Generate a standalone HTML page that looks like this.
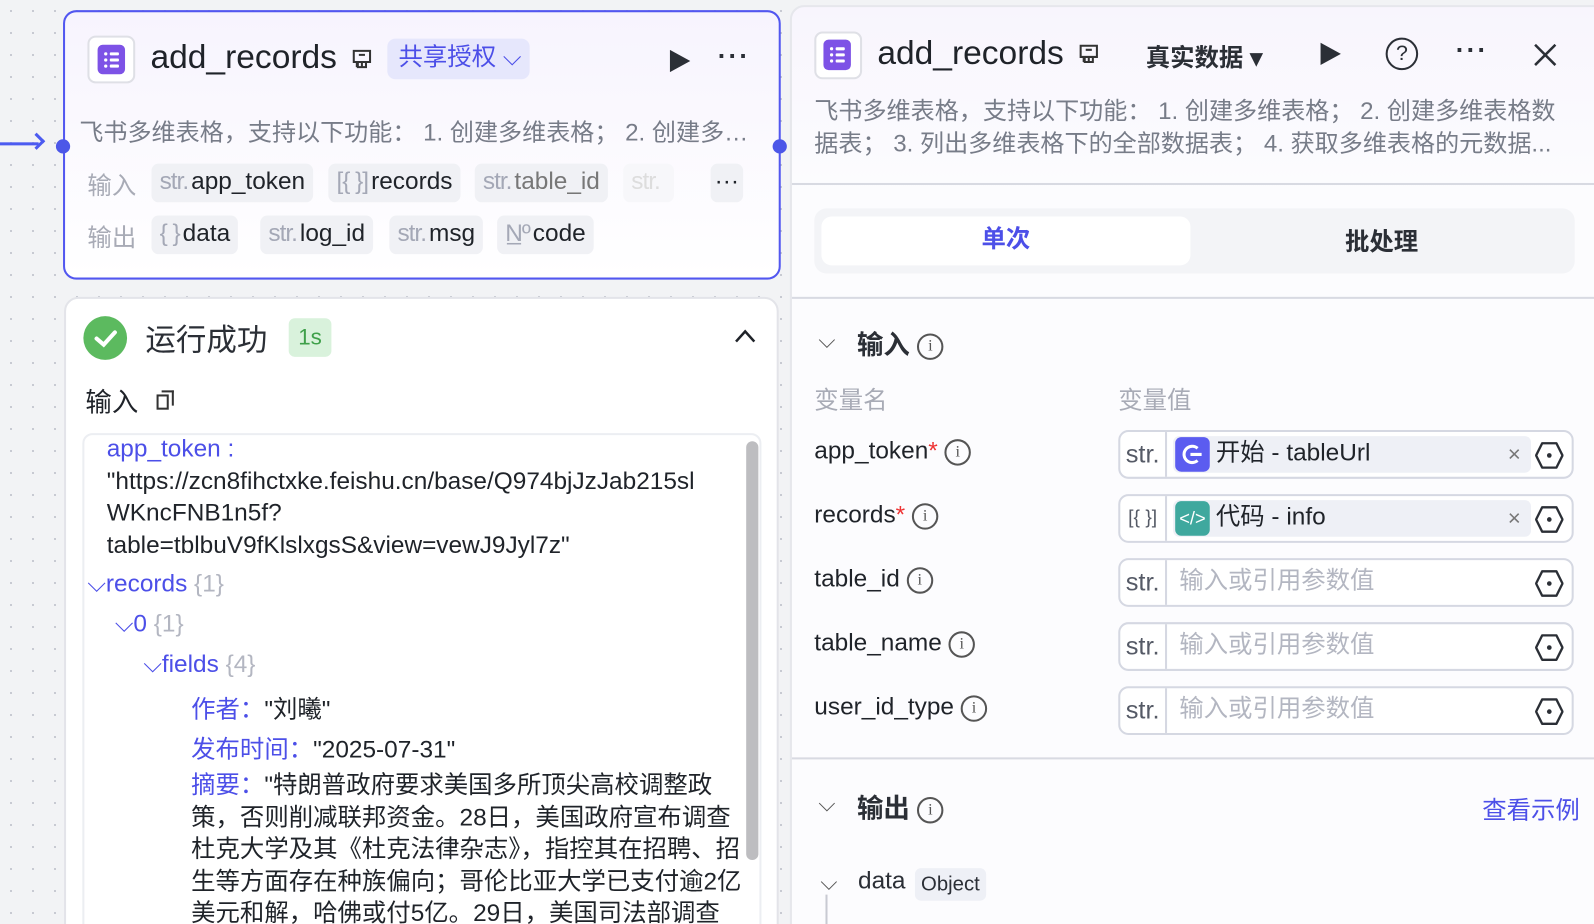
<!DOCTYPE html>
<html><head><meta charset="utf-8"><style>
*{box-sizing:border-box;margin:0;padding:0}
html,body{width:1594px;height:924px;overflow:hidden}
body{background:#f2f3f5;font-family:"Liberation Sans","Noto Sans CJK SC",sans-serif;color:#1f2329;position:relative;
background-image:radial-gradient(#c4c7cf 1px,transparent 1.2px);background-size:22px 22px}
#w{position:absolute;left:0;top:0;width:1568px;height:910px;transform:scale(1.0166);transform-origin:0 0}
.a{position:absolute;white-space:nowrap}
.tag{position:absolute;height:38px;background:#f0f1f5;border-radius:7px;font-size:24px;line-height:36px;padding:0 8px;color:#1f2329}
.tag i{font-style:normal;color:#a4a8b6;margin-right:3px;letter-spacing:-1px}
.ic{display:inline-block;width:26px;height:26px;border:2px solid #555;border-radius:50%;font-size:16px;line-height:22px;text-align:center;color:#555;font-family:"Liberation Serif",serif;vertical-align:middle;font-weight:normal}
.fld{position:absolute;left:1100px;width:448px;height:48px;border:2px solid #d5d8e2;border-radius:10px;background:#fff}
.fld .t{position:absolute;left:0;top:0;width:46px;height:44px;border-right:2px solid #d5d8e2;font-size:25px;line-height:44px;text-align:center;color:#555a66}
.fld .ph{position:absolute;left:58px;top:0;line-height:42px;font-size:24px;color:#b3b6c1}
.fld .hx{position:absolute;right:8px;top:9px}
.chip{position:absolute;left:52px;top:4px;width:352px;height:36px;background:#eef0f6;border-radius:6px}
.chip .b{position:absolute;left:2px;top:1px;width:34px;height:34px;border-radius:6px}
.chip .l{position:absolute;left:42px;top:0;line-height:34px;font-size:24px;color:#1f2329}
.chip .x{position:absolute;right:10px;top:0;line-height:36px;font-size:22px;color:#777}
.lbl{position:absolute;left:801px;font-size:24px;color:#1f2329}
</style></head><body><div id="w">

<!-- left node -->
<div class="a" style="left:0;top:140px;width:38px;height:3px;background:#4c5bf0"></div>
<div class="a" style="left:30px;top:133px;width:12px;height:12px;border-top:3px solid #4c5bf0;border-right:3px solid #4c5bf0;transform:rotate(45deg)"></div>
<div class="a" style="left:62px;top:10px;width:706px;height:265px;border:2px solid #5257f0;border-radius:13px;background:linear-gradient(#f7f4fe,#fff)"></div>
<div class="a" style="left:55px;top:137px;width:14px;height:14px;border-radius:50%;background:#4c57e8"></div>
<div class="a" style="left:760px;top:137px;width:14px;height:14px;border-radius:50%;background:#4c57e8"></div>
<div class="a" style="left:86px;top:35px;width:47px;height:47px;border:2px solid #dfe0e6;border-radius:8px;background:#fff"></div>
<div class="a" style="left:96px;top:44px;width:27px;height:29px;border-radius:5px;background:#7d52e6"></div>
<svg class="a" style="left:101px;top:50px" width="18" height="18"><g fill="#fff"><circle cx="3" cy="3" r="1.6"/><circle cx="3" cy="9" r="1.6"/><circle cx="3" cy="15" r="1.6"/><rect x="7" y="1.5" width="9" height="3" rx="1"/><rect x="7" y="7.5" width="9" height="3" rx="1"/><rect x="7" y="13.5" width="9" height="3" rx="1"/></g></svg>
<div class="a" style="left:148px;top:37px;font-size:33px;color:#1f2329">add_records</div>
<svg class="a" style="left:345px;top:47px" width="22" height="22"><path d="M3 3H19V14H15V19H7V14H3Z M7 14H15 M8 7H14 M6 19V14 M11 14V19" fill="none" stroke="#333" stroke-width="2"/></svg>
<div class="a" style="left:381px;top:38px;width:140px;height:40px;background:#e6e7fc;border-radius:8px;color:#4c4fe8;font-size:24px;line-height:38px;padding-left:11px">共享授权 ⌵</div>
<svg class="a" style="left:657px;top:48px" width="24" height="24"><path d="M2 1L22 12L2 23Z" fill="#2b2f36"/></svg>
<div class="a" style="left:706px;top:40px;font-size:26px;color:#2b2f36;letter-spacing:2px;font-weight:bold">···</div>
<div class="a" style="left:78px;top:111px;font-size:23.7px;color:#777c88">飞书多维表格，支持以下功能： 1. 创建多维表格； 2. 创建多…</div>
<div class="a" style="left:86px;top:163px;font-size:24px;color:#a8abb6">输入</div>
<div class="tag" style="left:149px;top:161px"><i>str.</i>app_token</div>
<div class="tag" style="left:323px;top:161px"><i>[{ }]</i>records</div>
<div class="tag" style="left:467px;top:161px;color:#777"><i>str.</i>table_id</div>
<div class="tag" style="left:613px;top:161px;width:50px;background:#f7f7fa;color:#ddd"><i style="color:#ddd">str.</i></div>
<div class="tag" style="left:699px;top:161px;width:32px;padding:0;text-align:center">···</div>
<div class="a" style="left:86px;top:214px;font-size:24px;color:#a8abb6">输出</div>
<div class="tag" style="left:149px;top:212px"><i>{ }</i>data</div>
<div class="tag" style="left:256px;top:212px"><i>str.</i>log_id</div>
<div class="tag" style="left:383px;top:212px"><i>str.</i>msg</div>
<div class="tag" style="left:489px;top:212px"><i>N̲º</i>code</div>

<!-- result card -->
<div class="a" style="left:63px;top:292px;width:703px;height:650px;border:2px solid #e3e4e9;border-radius:14px;background:#fff"></div>
<div class="a" style="left:82px;top:311px;width:43px;height:43px;border-radius:50%;background:#5cba5f"></div>
<svg class="a" style="left:92px;top:322px" width="24" height="22"><path d="M3 11L10 17L21 5" stroke="#fff" stroke-width="4" fill="none" stroke-linecap="round"/></svg>
<div class="a" style="left:143px;top:310px;font-size:30px;color:#2b2f36">运行成功</div>
<div class="a" style="left:284px;top:313px;width:42px;height:38px;background:#d9f2dc;border-radius:6px;color:#3fa04a;font-size:22px;line-height:38px;text-align:center">1s</div>
<svg class="a" style="left:722px;top:322px" width="22" height="16"><path d="M2 14L11 4L20 14" stroke="#1f2329" stroke-width="2.5" fill="none"/></svg>
<div class="a" style="left:84px;top:376px;font-size:26px;color:#1f2329">输入</div>
<div class="a" style="left:154px;top:388px;width:12px;height:15px;border:2px solid #333"></div>
<div class="a" style="left:159px;top:384px;width:12px;height:15px;border-top:2px solid #333;border-right:2px solid #333"></div>
<div class="a" style="left:81px;top:426px;width:668px;height:520px;border:2px solid #eceef2;border-radius:10px;background:#fff"></div>
<div class="a" style="left:734px;top:434px;width:12px;height:412px;background:#bdbdc0;border-radius:6px"></div>
<div class="a" style="left:105px;top:426px;font-size:24px;line-height:31.5px;color:#1f2329;white-space:normal;width:625px">
<span style="color:#4c4fe8">app_token :</span><br>"https://zcn8fihctxke.feishu.cn/base/Q974bjJzJab215sl<br>WKncFNB1n5f?<br>table=tblbuV9fKlslxgsS&amp;view=vewJ9Jyl7z"</div>
<div class="a" style="left:86px;top:561px;font-size:24px;color:#4c4fe8">⌵records <span style="color:#b3b6c1">{1}</span></div>
<div class="a" style="left:113px;top:600px;font-size:24px;color:#4c4fe8">⌵0 <span style="color:#b3b6c1">{1}</span></div>
<div class="a" style="left:141px;top:640px;font-size:24px;color:#4c4fe8">⌵fields <span style="color:#b3b6c1">{4}</span></div>
<div class="a" style="left:188px;top:678px;font-size:24px"><span style="color:#4c4fe8">作者：</span>"刘曦"</div>
<div class="a" style="left:188px;top:717px;font-size:24px"><span style="color:#4c4fe8">发布时间：</span>"2025-07-31"</div>
<div class="a" style="left:188px;top:757px;font-size:24px;line-height:31.5px;white-space:normal;width:542px"><span style="color:#4c4fe8">摘要：</span>"特朗普政府要求美国多所顶尖高校调整政策，否则削减联邦资金。28日，美国政府宣布调查杜克大学及其《杜克法律杂志》，指控其在招聘、招生等方面存在种族偏向；哥伦比亚大学已支付逾2亿美元和解，哈佛或付5亿。29日，美国司法部调查</div>

<!-- right panel -->
<div class="a" style="left:777px;top:5px;width:830px;height:930px;border:2px solid #e6e7ec;border-radius:14px;background:linear-gradient(#f8f5fd 0,#fcfcfe 180px)"></div>
<div class="a" style="left:801px;top:31px;width:47px;height:47px;border:2px solid #dfe0e6;border-radius:8px;background:#fff"></div>
<div class="a" style="left:810px;top:39px;width:27px;height:30px;border-radius:5px;background:#7d52e6"></div>
<svg class="a" style="left:815px;top:45px" width="18" height="18"><g fill="#fff"><circle cx="3" cy="3" r="1.6"/><circle cx="3" cy="9" r="1.6"/><circle cx="3" cy="15" r="1.6"/><rect x="7" y="1.5" width="9" height="3" rx="1"/><rect x="7" y="7.5" width="9" height="3" rx="1"/><rect x="7" y="13.5" width="9" height="3" rx="1"/></g></svg>
<div class="a" style="left:863px;top:33px;font-size:33px">add_records</div>
<svg class="a" style="left:1060px;top:42px" width="22" height="22"><path d="M3 3H19V14H15V19H7V14H3Z M7 14H15 M8 7H14 M6 19V14 M11 14V19" fill="none" stroke="#333" stroke-width="2"/></svg>
<div class="a" style="left:1127px;top:37px;font-size:24px;font-weight:bold;color:#2b2f36">真实数据 ▾</div>
<svg class="a" style="left:1297px;top:41px" width="24" height="24"><path d="M2 1L22 12L2 23Z" fill="#2b2f36"/></svg>
<div class="a" style="left:1363px;top:37px;width:32px;height:32px;border:2.5px solid #2b2f36;border-radius:50%;text-align:center;font-size:21px;line-height:27px;color:#2b2f36">?</div>
<div class="a" style="left:1432px;top:34px;font-size:26px;color:#2b2f36;letter-spacing:2px;font-weight:bold">···</div>
<svg class="a" style="left:1508px;top:42px" width="24" height="24"><path d="M2 2L22 22M22 2L2 22" stroke="#2b2f36" stroke-width="2.5"/></svg>
<div class="a" style="left:801px;top:94px;font-size:23.7px;line-height:32px;color:#777c88;white-space:normal;width:745px">飞书多维表格，支持以下功能： 1. 创建多维表格； 2. 创建多维表格数据表； 3. 列出多维表格下的全部数据表； 4. 获取多维表格的元数据...</div>
<div class="a" style="left:779px;top:180px;width:815px;height:2px;background:#d8dae2"></div>
<div class="a" style="left:801px;top:205px;width:748px;height:64px;background:#f3f4f7;border-radius:12px"></div>
<div class="a" style="left:808px;top:213px;width:363px;height:48px;background:#fff;border-radius:10px;text-align:center;line-height:46px;font-size:24px;color:#4c4fe8;font-weight:bold">单次</div>
<div class="a" style="left:1323px;top:218px;font-size:24px;font-weight:bold;color:#2b2f36">批处理</div>
<div class="a" style="left:779px;top:292px;width:815px;height:2px;background:#d8dae2"></div>
<div class="a" style="left:805px;top:322px;font-size:22px;color:#555">⌵</div>
<div class="a" style="left:843px;top:319px;font-size:26px;font-weight:bold;color:#2b2f36">输入 <span class="ic">i</span></div>
<div class="a" style="left:801px;top:374px;font-size:24px;color:#a8abb6">变量名</div>
<div class="a" style="left:1100px;top:374px;font-size:24px;color:#a8abb6">变量值</div>

<div class="lbl" style="top:430px">app_token<span style="color:#e33">*</span> <span class="ic">i</span></div>
<div class="lbl" style="top:493px">records<span style="color:#e33">*</span> <span class="ic">i</span></div>
<div class="lbl" style="top:556px">table_id <span class="ic">i</span></div>
<div class="lbl" style="top:619px">table_name <span class="ic">i</span></div>
<div class="lbl" style="top:682px">user_id_type <span class="ic">i</span></div>

<svg width="0" height="0" style="position:absolute"><defs><g id="hx"><path d="M7 2H21L27 14L21 26H7L1 14Z" fill="none" stroke="#2b2f36" stroke-width="2.3" stroke-linejoin="round"/><circle cx="14" cy="14" r="2.3" fill="#2b2f36"/></g></defs></svg>

<div class="fld" style="top:423px"><div class="t">str.</div><div class="chip"><div class="b" style="background:#5b5cf0"><svg width="34" height="34"><path d="M22 11A8 8 0 1 0 22 23" fill="none" stroke="#fff" stroke-width="3"/><path d="M15 17H26" stroke="#fff" stroke-width="3"/></svg></div><div class="l">开始 - tableUrl</div><div class="x">×</div></div><svg class="hx" width="28" height="28"><use href="#hx"/></svg></div>
<div class="fld" style="top:486px"><div class="t" style="font-size:19px">[{ }]</div><div class="chip"><div class="b" style="background:#3fa89e;color:#fff;font-size:18px;text-align:center;line-height:34px">&lt;/&gt;</div><div class="l">代码 - info</div><div class="x">×</div></div><svg class="hx" width="28" height="28"><use href="#hx"/></svg></div>
<div class="fld" style="top:549px"><div class="t">str.</div><div class="ph">输入或引用参数值</div><svg class="hx" width="28" height="28"><use href="#hx"/></svg></div>
<div class="fld" style="top:612px"><div class="t">str.</div><div class="ph">输入或引用参数值</div><svg class="hx" width="28" height="28"><use href="#hx"/></svg></div>
<div class="fld" style="top:675px"><div class="t">str.</div><div class="ph">输入或引用参数值</div><svg class="hx" width="28" height="28"><use href="#hx"/></svg></div>

<div class="a" style="left:779px;top:745px;width:815px;height:2px;background:#d8dae2"></div>
<div class="a" style="left:805px;top:778px;font-size:22px;color:#555">⌵</div>
<div class="a" style="left:843px;top:775px;font-size:26px;font-weight:bold;color:#2b2f36">输出 <span class="ic">i</span></div>
<div class="a" style="left:1458px;top:777px;font-size:24px;color:#4c4fe8">查看示例</div>
<div class="a" style="left:807px;top:855px;font-size:22px;color:#555">⌵</div>
<div class="a" style="left:844px;top:853px;font-size:24px;color:#2b2f36">data</div>
<div class="a" style="left:900px;top:854px;height:32px;padding:0 6px;background:#eef0f6;border-radius:6px;font-size:20px;line-height:32px;color:#2b2f36">Object</div>
<div class="a" style="left:812px;top:880px;width:2px;height:44px;background:#c8cad2"></div>
</div></body></html>
